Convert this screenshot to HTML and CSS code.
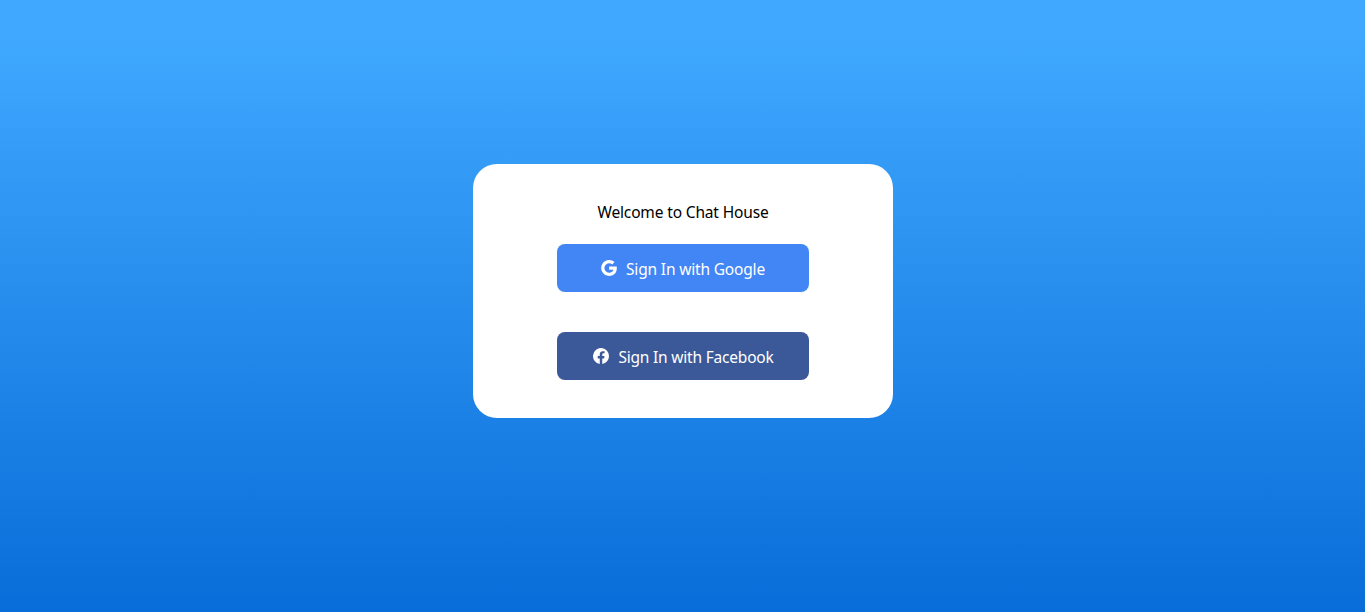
FILE: index.html
```html
<!DOCTYPE html>
<html lang="en">
<head>
<meta charset="utf-8">
<title>Chat House</title>
<link rel="stylesheet" href="styles.css">
</head>
<body>
<main class="login-page">
  <section class="login-card">
    <h2 class="title">Welcome to Chat House</h2>
    <button class="login-button google">
      <svg class="icon" viewBox="128 128 768 768" fill="currentColor" aria-hidden="true"><path d="M881 442.400H519.700v148.500h206.400c-8.900 48-35.900 88.600-76.600 115.800-34.400 23-78.300 36.600-129.900 36.600-99.900 0-184.400-67.500-214.600-158.200-7.600-23-12-47.600-12-72.900s4.400-49.900 12-72.900c30.300-90.600 114.800-158.100 214.700-158.100 56.300 0 106.800 19.400 146.600 57.400l110-110.100c-66.500-62-153.200-100-256.600-100-149.900 0-279.600 86-342.700 211.400-26 51.800-40.800 110.400-40.800 172.400S151 632.800 177 684.600C240.100 810 369.800 896 519.700 896c103.600 0 190.400-34.400 253.800-93 72.500-66.800 114.400-165.200 114.400-282.100 0-27.200-2.400-53.300-6.900-78.500z"/></svg>
      <span class="label">Sign In with Google</span>
    </button>
    <button class="login-button facebook">
      <svg class="icon" viewBox="0 0 16 16" fill="currentColor" aria-hidden="true"><path d="M16 8.050a8 8 0 1 0-9.250 7.950v-5.620H4.720V8.050h2.030V6.280c0-2.020 1.200-3.140 3.020-3.140.88 0 1.790.16 1.790.16v1.980h-1.010c-.99 0-1.300.62-1.300 1.260v1.510h2.220l-.35 2.330H9.250V16A8 8 0 0 0 16 8.050z"/></svg>
      <span class="label">Sign In with Facebook</span>
    </button>
  </section>
</main>
</body>
</html>
```
FILE: styles.css
```css
* { box-sizing: border-box; }
body { margin: 0; font-family: "Segoe UI", "Noto Sans", "Open Sans", sans-serif; }
.login-page {
  height: 100vh;
  padding-top: 164px;
  background: linear-gradient(180deg, #40a9ff 0%, #40a9ff 5%, #096dd9 100%);
}
.login-card {
  width: 420px;
  height: 254px;
  margin: 0 auto 0 473px;
  padding-top: 36px;
  display: flex;
  flex-direction: column;
  align-items: center;
  border-radius: 24px;
  background: #fff;
  color: #000;
}
.title { margin: 0 0 20px; font-size: 15.5px; font-weight: 400; line-height: 24px; letter-spacing: -0.15px; }
.login-button {
  width: 252px;
  height: 48px;
  flex: none;
  display: flex;
  align-items: center;
  justify-content: center;
  gap: 9px;
  padding: 0;
  border: 0;
  border-radius: 8px;
  color: #fff;
  font: 400 15.5px/24px "Segoe UI", "Noto Sans", sans-serif;
  letter-spacing: -0.17px;
}
.label { padding-top: 2px; }
.google { margin-bottom: 40px; background: #4285f4; }
.facebook { padding-left: 1px; background: #3b5998; letter-spacing: -0.2px; }
.icon { width: 16px; height: 16px; flex: none; }
```
